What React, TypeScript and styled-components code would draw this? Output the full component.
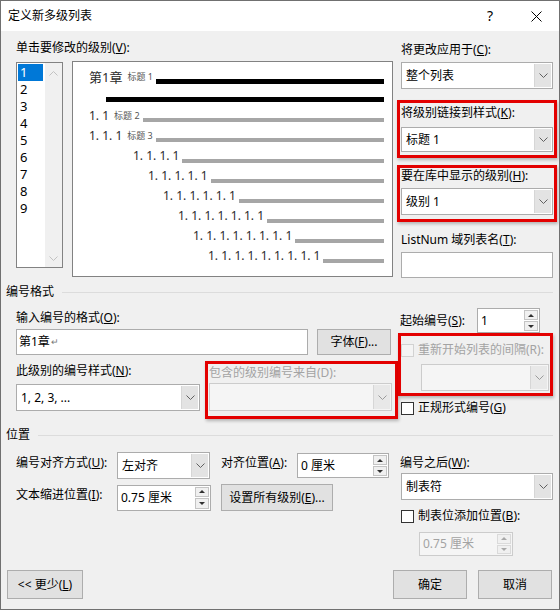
import React from "react";
import styled, { createGlobalStyle } from "styled-components";

const GlobalStyle = createGlobalStyle`
  * { box-sizing: border-box; }
  html, body { margin: 0; padding: 0; background: #ffffff; }
  body {
    font-family: "Noto Sans", "Noto Sans CJK SC", sans-serif;
    font-size: 12px;
    line-height: 16px;
    color: #000;
  }
`;

const Window = styled.div`
  width: 560px;
  height: 610px;
  border: 1px solid #707070;
  background: #f0f0f0;
  display: flex;
  flex-direction: column;
  overflow: hidden;
`;

const TitleBar = styled.div`
  height: 30px;
  flex-shrink: 0;
  background: #fff;
  display: flex;
  align-items: center;
  padding-left: 7px;
`;

const Title = styled.div`
  flex: 1;
`;

const TitleButton = styled.div`
  width: 46px;
  height: 30px;
  display: flex;
  align-items: center;
  justify-content: center;
  font-size: 14px;
`;

const Body = styled.div`
  flex: 1;
  display: flex;
  flex-direction: column;
  padding: 9px 6px 10px 15px;
`;

const TopSection = styled.div`
  display: flex;
  gap: 8px;
`;

const Column = styled.div<{ $w: number }>`
  width: ${(p) => p.$w}px;
  flex-shrink: 0;
  display: flex;
  flex-direction: column;
`;

const FieldLabel = styled.div<{ $mt?: number; $disabled?: boolean }>`
  margin-top: ${(p) => p.$mt ?? 0}px;
  height: 16px;
  line-height: 16px;
  white-space: nowrap;
  color: ${(p) => (p.$disabled ? "#a3a3a3" : "#000")};
`;

const ListRow = styled.div`
  display: flex;
  gap: 9px;
  margin-top: 5px;
  height: 216px;
`;

const ListBox = styled.div`
  width: 47px;
  height: 206px;
  margin-top: 1px;
  border: 1px solid #828282;
  background: #fff;
  display: flex;
`;

const ListItems = styled.div`
  flex: 1;
  padding: 1px;
`;

const ListItem = styled.div<{ $selected?: boolean }>`
  width: 25px;
  height: 17px;
  line-height: 17px;
  padding-left: 2px;
  font-size: 13px;
  background: ${(p) => (p.$selected ? "#0078d7" : "transparent")};
  color: ${(p) => (p.$selected ? "#fff" : "#000")};
`;

const ScrollTrack = styled.div`
  width: 17px;
  background: #f0f0f0;
  display: flex;
  flex-direction: column;
  justify-content: space-between;
  align-items: center;
  padding: 8px 0 6px;
`;

const Preview = styled.div`
  width: 321px;
  height: 216px;
  border: 1px solid #828282;
  background: #fff;
  padding: 5px 8px 0 0;
`;

const PreviewRow = styled.div<{ $indent: number; $h?: number }>`
  display: flex;
  align-items: center;
  height: ${(p) => p.$h ?? 20}px;
  padding-left: ${(p) => p.$indent}px;
`;

const Num = styled.span<{ $big?: boolean }>`
  font-size: ${(p) => (p.$big ? 13 : 12)}px;
  color: #2b2b2b;
  white-space: nowrap;
`;

const Tag = styled.span`
  font-size: 9px;
  color: #555;
  margin-left: 5px;
  white-space: nowrap;
`;

const Bar = styled.div<{ $dark?: boolean; $shift?: number }>`
  flex: 1;
  height: ${(p) => (p.$dark ? 5 : 4)}px;
  margin-top: ${(p) => p.$shift ?? 8}px;
  margin-left: 3px;
  background: ${(p) => (p.$dark ? "#000" : "#a6a6a6")};
`;

const Highlight = styled.div<{ $mt?: number; $pad: string; $mx?: string; $w?: number }>`
  margin: ${(p) => p.$mt ?? 0}px ${(p) => p.$mx ?? "0"} 0;
  ${(p) => (p.$w ? `width: ${p.$w}px; flex-shrink: 0;` : "")}
  border: 3px solid #e30000;
  padding: ${(p) => p.$pad};
  box-shadow: 1px 2px 3px rgba(0, 0, 0, 0.25);
  display: flex;
  flex-direction: column;
`;

const ComboBox = styled.div<{ $h?: number; $mt?: number; $disabled?: boolean; $ml?: number; $mr?: number }>`
  display: flex;
  height: ${(p) => p.$h ?? 27}px;
  margin: ${(p) => p.$mt ?? 0}px ${(p) => p.$mr ?? 0}px 0 ${(p) => p.$ml ?? 0}px;
  background: ${(p) => (p.$disabled ? "#f5f5f5" : "#fff")};
  border: 1px solid ${(p) => (p.$disabled ? "#cccccc" : "#acacac")};
  padding: 1px;
`;

const ComboText = styled.div`
  flex: 1;
  display: flex;
  align-items: center;
  padding-left: 3px;
  white-space: nowrap;
`;

const ComboButton = styled.div<{ $disabled?: boolean }>`
  width: 17px;
  background: ${(p) => (p.$disabled ? "#e8e8e8" : "#e3e3e3")};
  border-left: 1px solid #d6d6d6;
  display: flex;
  align-items: center;
  justify-content: center;
`;

const TextBox = styled.div<{ $w?: number; $h?: number; $mt?: number }>`
  ${(p) => (p.$w ? `width: ${p.$w}px;` : "")}
  height: ${(p) => p.$h ?? 26}px;
  margin-top: ${(p) => p.$mt ?? 0}px;
  background: #fff;
  border: 1px solid #acacac;
  display: flex;
  align-items: center;
  padding-left: 2px;
  white-space: nowrap;
`;

const Return = styled.span`
  font-size: 9px;
  color: #777;
  margin-left: 1px;
`;

const SpinBox = styled.div<{ $w: number; $h?: number; $disabled?: boolean; $mt?: number; $ml?: number }>`
  width: ${(p) => p.$w}px;
  height: ${(p) => p.$h ?? 25}px;
  margin-top: ${(p) => p.$mt ?? 0}px;
  margin-left: ${(p) => p.$ml ?? 0}px;
  flex-shrink: 0;
  display: flex;
  background: ${(p) => (p.$disabled ? "#f5f5f5" : "#fff")};
  border: 1px solid ${(p) => (p.$disabled ? "#cccccc" : "#acacac")};
  color: ${(p) => (p.$disabled ? "#a3a3a3" : "#000")};
  padding: 1px;
`;

const SpinText = styled.div`
  flex: 1;
  display: flex;
  align-items: center;
  padding-left: 2px;
  white-space: nowrap;
`;

const SpinArrows = styled.div`
  width: 14px;
  display: flex;
  flex-direction: column;
  gap: 1px;
`;

const SpinArrow = styled.div<{ $down?: boolean; $disabled?: boolean }>`
  flex: 1;
  background: #f0f0f0;
  border: 1px solid ${(p) => (p.$disabled ? "#dadada" : "#c4c4c4")};
  display: flex;
  align-items: center;
  justify-content: center;
  &::before {
    content: "";
    border-left: 3px solid transparent;
    border-right: 3px solid transparent;
    ${(p) => (p.$down ? "border-top" : "border-bottom")}: 3px solid
      ${(p) => (p.$disabled ? "#a8a8a8" : "#303030")};
  }
`;

const Button = styled.div<{ $w: number; $h?: number; $ml?: number }>`
  width: ${(p) => p.$w}px;
  height: ${(p) => p.$h ?? 26}px;
  margin-left: ${(p) => p.$ml ?? 0}px;
  flex-shrink: 0;
  background: #e1e1e1;
  border: 1px solid #adadad;
  display: flex;
  align-items: center;
  justify-content: center;
  white-space: nowrap;
`;

const SectionHeading = styled.div<{ $mt: number }>`
  display: flex;
  align-items: center;
  height: 16px;
  margin: ${(p) => p.$mt}px 0 0 -10px;
  &::after {
    content: "";
    flex: 1;
    border-top: 1px solid #dcdcdc;
    margin-left: 8px;
  }
`;

const NumberSection = styled.div`
  display: flex;
`;

const InputRow = styled.div`
  display: flex;
  gap: 9px;
  margin-top: 3px;
`;

const StyleRow = styled.div`
  display: flex;
  gap: 5px;
  margin-top: 6px;
`;

const StyleCol = styled.div`
  width: 184px;
  flex-shrink: 0;
  padding-top: 2px;
  display: flex;
  flex-direction: column;
`;

const StartRow = styled.div`
  display: flex;
  align-items: center;
  height: 25px;
  margin-top: 8px;
  padding: 0 13px 0 2px;
  justify-content: space-between;
`;

const CheckRow = styled.div<{ $mt?: number; $pl?: number; $disabled?: boolean }>`
  display: flex;
  align-items: center;
  gap: 4px;
  height: 16px;
  margin-top: ${(p) => p.$mt ?? 0}px;
  padding-left: ${(p) => p.$pl ?? 0}px;
  color: ${(p) => (p.$disabled ? "#a3a3a3" : "#000")};
  white-space: nowrap;
`;

const CheckBox = styled.span<{ $disabled?: boolean }>`
  width: 13px;
  height: 13px;
  flex-shrink: 0;
  border: 1px solid ${(p) => (p.$disabled ? "#d2d2d2" : "#333")};
  background: ${(p) => (p.$disabled ? "#f4f4f4" : "#fff")};
`;

const PositionSection = styled.div`
  display: flex;
  justify-content: space-between;
`;

const PosGrid = styled.div`
  display: grid;
  grid-template-columns: 101px 94px 86px 92px;
  grid-auto-rows: 27px;
  row-gap: 5px;
  margin-top: 9px;
`;

const GridLabel = styled.div<{ $gap?: boolean }>`
  padding-top: 3px;
  padding-left: ${(p) => (p.$gap ? 10 : 0)}px;
  white-space: nowrap;
`;

const GridCell = styled.div<{ $span?: boolean; $gap?: boolean }>`
  ${(p) => (p.$span ? "grid-column: 3 / span 2;" : "")}
  padding-left: ${(p) => (p.$gap ? 10 : 0)}px;
  display: flex;
  align-items: center;
`;

const AlignCombo = styled.div`
  width: 93px;
`;

const Footer = styled.div`
  margin-top: auto;
  display: flex;
  align-items: center;
  gap: 11px;
  padding-right: 1px;
`;

const Spacer = styled.div`
  flex: 1;
`;

const Chevron: React.FC<{ color?: string; up?: boolean }> = ({ color = "#606060", up }) => (
  <svg width="9" height="5" viewBox="0 0 9 5">
    <polyline
      points={up ? "0.5,4.5 4.5,0.5 8.5,4.5" : "0.5,0.5 4.5,4.5 8.5,0.5"}
      fill="none"
      stroke={color}
      strokeWidth="1"
    />
  </svg>
);

const Combo: React.FC<{
  value?: string;
  h?: number;
  mt?: number;
  ml?: number;
  mr?: number;
  disabled?: boolean;
}> = ({ value, h, mt, ml, mr, disabled }) => (
  <ComboBox $h={h} $mt={mt} $ml={ml} $mr={mr} $disabled={disabled}>
    <ComboText>{value}</ComboText>
    <ComboButton $disabled={disabled}>
      <Chevron color={disabled ? "#9a9a9a" : "#606060"} />
    </ComboButton>
  </ComboBox>
);

const Spin: React.FC<{
  value: string;
  w: number;
  h?: number;
  mt?: number;
  ml?: number;
  disabled?: boolean;
}> = ({ value, w, h, mt, ml, disabled }) => (
  <SpinBox $w={w} $h={h} $mt={mt} $ml={ml} $disabled={disabled}>
    <SpinText>{value}</SpinText>
    <SpinArrows>
      <SpinArrow $disabled={disabled} />
      <SpinArrow $down $disabled={disabled} />
    </SpinArrows>
  </SpinBox>
);

const previewRows = [
  { indent: 16, num: "1. 1", tag: "标题 2" },
  { indent: 16, num: "1. 1. 1", tag: "标题 3" },
  { indent: 60, num: "1. 1. 1. 1" },
  { indent: 75, num: "1. 1. 1. 1. 1" },
  { indent: 90, num: "1. 1. 1. 1. 1. 1" },
  { indent: 105, num: "1. 1. 1. 1. 1. 1. 1" },
  { indent: 120, num: "1. 1. 1. 1. 1. 1. 1. 1" },
  { indent: 135, num: "1. 1. 1. 1. 1. 1. 1. 1. 1" },
];

const App: React.FC = () => {
  return (
    <>
      <GlobalStyle />
      <Window>
        <TitleBar>
          <Title>定义新多级列表</Title>
          <TitleButton>?</TitleButton>
          <TitleButton>
            <svg width="11" height="11" viewBox="0 0 11 11">
              <path d="M0.5 0.5 L10.5 10.5 M10.5 0.5 L0.5 10.5" stroke="#000" strokeWidth="1" />
            </svg>
          </TitleButton>
        </TitleBar>
        <Body>
          <TopSection>
            <Column $w={377}>
              <FieldLabel>
                单击要修改的级别(<u>V</u>):
              </FieldLabel>
              <ListRow>
                <ListBox>
                  <ListItems>
                    {[1, 2, 3, 4, 5, 6, 7, 8, 9].map((n) => (
                      <ListItem key={n} $selected={n === 1}>
                        {n}
                      </ListItem>
                    ))}
                  </ListItems>
                  <ScrollTrack>
                    <Chevron up color="#c2c2c2" />
                    <Chevron color="#c2c2c2" />
                  </ScrollTrack>
                </ListBox>
                <Preview>
                  <PreviewRow $indent={16}>
                    <Num $big>第1章</Num>
                    <Tag>标题 1</Tag>
                    <Bar $dark />
                  </PreviewRow>
                  <PreviewRow $indent={30} $h={19}>
                    <Bar $dark $shift={6} />
                  </PreviewRow>
                  {previewRows.map((r) => (
                    <PreviewRow key={r.num} $indent={r.indent}>
                      <Num>{r.num}</Num>
                      {r.tag && <Tag>{r.tag}</Tag>}
                      <Bar $shift={r.tag ? 7 : 9} />
                    </PreviewRow>
                  ))}
                </Preview>
              </ListRow>
            </Column>
            <Column $w={152}>
              <FieldLabel $mt={2}>
                将更改应用于(<u>C</u>):
              </FieldLabel>
              <Combo value="整个列表" mt={4} />
              <Highlight $mt={11} $mx="-4px" $pad="2px 1px 3px">
                <FieldLabel>
                  将级别链接到样式(<u>K</u>):
                </FieldLabel>
                <Combo value="标题 1" mt={6} h={25} />
              </Highlight>
              <Highlight $mt={7} $mx="-4px" $pad="0 1px 4px">
                <FieldLabel>
                  要在库中显示的级别(<u>H</u>):
                </FieldLabel>
                <Combo value="级别 1" mt={4} />
              </Highlight>
              <FieldLabel $mt={10}>
                ListNum 域列表名(<u>T</u>):
              </FieldLabel>
              <TextBox $mt={4} />
            </Column>
          </TopSection>

          <SectionHeading $mt={6}>编号格式</SectionHeading>
          <NumberSection>
            <Column $w={382}>
              <FieldLabel $mt={10}>
                输入编号的格式(<u>O</u>):
              </FieldLabel>
              <InputRow>
                <TextBox $w={292}>
                  第1章<Return>↵</Return>
                </TextBox>
                <Button $w={74}>
                  <span>
                    字体(<u>F</u>)...
                  </span>
                </Button>
              </InputRow>
              <StyleRow>
                <StyleCol>
                  <FieldLabel>
                    此级别的编号样式(<u>N</u>):
                  </FieldLabel>
                  <Combo value="1, 2, 3, ..." mt={5} />
                </StyleCol>
                <Highlight $w={193} $pad="1px 3px 5px 1px">
                  <FieldLabel $disabled>包含的级别编号来自(D):</FieldLabel>
                  <Combo mt={2} h={28} disabled />
                </Highlight>
              </StyleRow>
            </Column>
            <Column $w={155}>
              <StartRow>
                <span>
                  起始编号(<u>S</u>):
                </span>
                <Spin value="1" w={63} />
              </StartRow>
              <Highlight $mt={-1} $mx="-4px 0 0" $pad="6px 0 2px">
                <CheckRow $disabled>
                  <CheckBox $disabled />
                  <span>重新开始列表的间隔(R):</span>
                </CheckRow>
                <Combo mt={6} ml={20} mr={1} disabled />
              </Highlight>
              <CheckRow $mt={4} $pl={3}>
                <CheckBox />
                <span>
                  正规形式编号(<u>G</u>)
                </span>
              </CheckRow>
            </Column>
          </NumberSection>

          <SectionHeading $mt={8}>位置</SectionHeading>
          <PositionSection>
            <PosGrid>
              <GridLabel>
                编号对齐方式(<u>U</u>):
              </GridLabel>
              <GridCell>
                <AlignCombo>
                  <Combo value="左对齐" />
                </AlignCombo>
              </GridCell>
              <GridLabel $gap>
                对齐位置(<u>A</u>):
              </GridLabel>
              <GridCell>
                <Spin value="0 厘米" w={92} />
              </GridCell>
              <GridLabel>
                文本缩进位置(<u>I</u>):
              </GridLabel>
              <GridCell>
                <Spin value="0.75 厘米" w={94} h={26} />
              </GridCell>
              <GridCell $span $gap>
                <Button $w={112} $h={27}>
                  <span>
                    设置所有级别(<u>E</u>)...
                  </span>
                </Button>
              </GridCell>
            </PosGrid>
            <Column $w={153}>
              <FieldLabel $mt={12}>
                编号之后(<u>W</u>):
              </FieldLabel>
              <Combo value="制表符" mt={2} ml={1} />
              <CheckRow $mt={8} $pl={1}>
                <CheckBox />
                <span>
                  制表位添加位置(<u>B</u>):
                </span>
              </CheckRow>
              <Spin value="0.75 厘米" w={94} h={24} mt={8} ml={19} disabled />
            </Column>
          </PositionSection>

          <Footer>
            <Button $w={76} $h={29} $ml={-9}>
              <span>
                &lt;&lt; 更少(<u>L</u>)
              </span>
            </Button>
            <Spacer />
            <Button $w={74} $h={29}>
              确定
            </Button>
            <Button $w={74} $h={29}>
              取消
            </Button>
          </Footer>
        </Body>
      </Window>
    </>
  );
};

export default App;
